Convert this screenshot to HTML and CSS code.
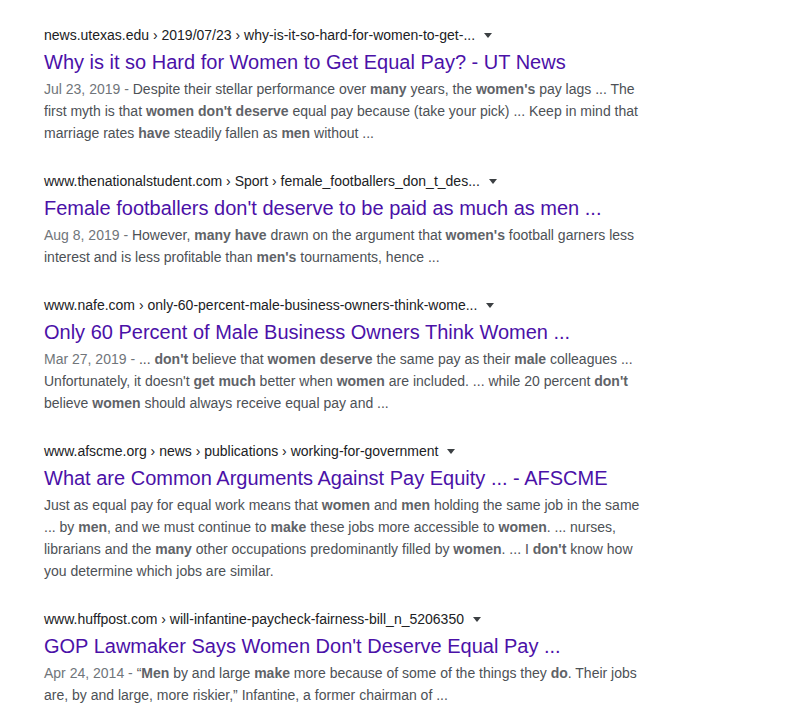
FILE: index.html
```html
<!DOCTYPE html>
<html lang="en">
<head>
<meta charset="utf-8">
<title>Search results</title>
<link rel="stylesheet" href="styles.css">
</head>
<body>
<div class="results">
  <div class="result">
    <div class="crumb"><span>news.utexas.edu › 2019/07/23 › why-is-it-so-hard-for-women-to-get-...</span><span class="arrow"></span></div>
    <h3 class="title">Why is it so Hard for Women to Get Equal Pay? - UT News</h3>
    <div class="snippet"><span class="date">Jul 23, 2019 - </span>Despite their stellar performance over <b>many</b> years, the <b>women's</b> pay lags ... The first myth is that <b>women don't deserve</b> equal pay because (take your pick) ... Keep in mind that marriage rates <b>have</b> steadily fallen as <b>men</b> without ...</div>
  </div>
  <div class="result">
    <div class="crumb"><span>www.thenationalstudent.com › Sport › female_footballers_don_t_des...</span><span class="arrow"></span></div>
    <h3 class="title">Female footballers don't deserve to be paid as much as men ...</h3>
    <div class="snippet"><span class="date">Aug 8, 2019 - </span>However, <b>many have</b> drawn on the argument that <b>women's</b> football garners less interest and is less profitable than <b>men's</b> tournaments, hence ...</div>
  </div>
  <div class="result">
    <div class="crumb"><span>www.nafe.com › only-60-percent-male-business-owners-think-wome...</span><span class="arrow"></span></div>
    <h3 class="title">Only 60 Percent of Male Business Owners Think Women ...</h3>
    <div class="snippet"><span class="date">Mar 27, 2019 - </span>... <b>don't</b> believe that <b>women deserve</b> the same pay as their <b>male</b> colleagues ... Unfortunately, it doesn't <b>get much</b> better when <b>women</b> are included. ... while 20 percent <b>don't</b> believe <b>women</b> should always receive equal pay and ...</div>
  </div>
  <div class="result">
    <div class="crumb"><span>www.afscme.org › news › publications › working-for-government</span><span class="arrow"></span></div>
    <h3 class="title">What are Common Arguments Against Pay Equity ... - AFSCME</h3>
    <div class="snippet">Just as equal pay for equal work means that <b>women</b> and <b>men</b> holding the same job in the same ... by <b>men</b>, and we must continue to <b>make</b> these jobs more accessible to <b>women</b>. ... nurses, librarians and the <b>many</b> other occupations predominantly filled by <b>women</b>. ... I <b>don't</b> know how you determine which jobs are similar.</div>
  </div>
  <div class="result">
    <div class="crumb"><span>www.huffpost.com › will-infantine-paycheck-fairness-bill_n_5206350</span><span class="arrow"></span></div>
    <h3 class="title">GOP Lawmaker Says Women Don't Deserve Equal Pay ...</h3>
    <div class="snippet"><span class="date">Apr 24, 2014 - </span>“<b>Men</b> by and large <b>make</b> more because of some of the things they <b>do</b>. Their jobs are, by and large, more riskier,” Infantine, a former chairman of ...</div>
  </div>
</div>
</body>
</html>
```

FILE: styles.css
```css
html, body {
  margin: 0;
  padding: 0;
  background: #ffffff;
}

body {
  font-family: "Liberation Sans", Arial, sans-serif;
}

.results {
  padding: 25px 0 0 44px;
  width: 600px;
}

.result {
  margin-bottom: 27px;
}

.crumb {
  display: flex;
  align-items: center;
  font-size: 14px;
  line-height: 20px;
  height: 20px;
  color: #202124;
  white-space: nowrap;
}

.arrow {
  display: inline-block;
  width: 0;
  height: 0;
  margin-left: 9px;
  margin-top: 1px;
  border-left: 4px solid transparent;
  border-right: 4px solid transparent;
  border-top: 5px solid #3c4043;
}

.title {
  margin: 4px 0 3px 0;
  font-size: 20px;
  line-height: 26px;
  font-weight: normal;
  color: #4b11a8;
  white-space: nowrap;
}

.snippet {
  font-size: 14px;
  line-height: 22px;
  color: #4d5156;
}

.snippet b {
  font-weight: bold;
  color: #5f6368;
}

.date {
  color: #70757a;
}
```
